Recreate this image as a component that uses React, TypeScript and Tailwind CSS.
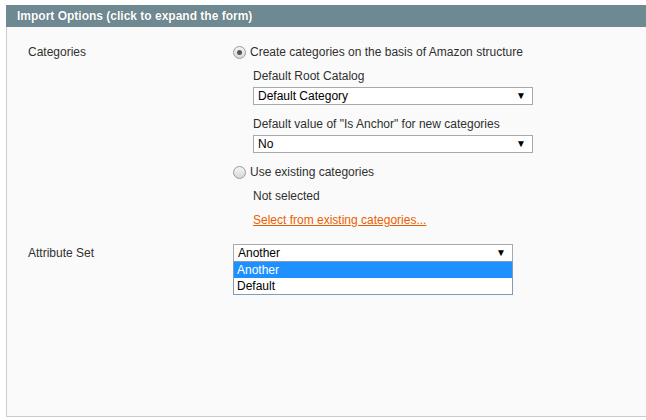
import React from "react";

const font = { fontFamily: '"Liberation Sans", Arial, sans-serif' };

function Radio({ checked }: { checked?: boolean }) {
  return (
    <span className="w-[13px] h-[13px] rounded-full border border-[#9a9a9a] bg-gradient-to-b from-[#f4f4f4] to-[#d8d8d8] flex items-center justify-center flex-shrink-0">
      {checked && <span className="w-[5px] h-[5px] rounded-full bg-[#555]" />}
    </span>
  );
}

function Select({ value }: { value: string }) {
  return (
    <div className="w-[280px] h-[18px] border border-[#a9a9a9] bg-white flex items-center justify-between pl-[4px] pr-[6px] text-black text-[12px] leading-none">
      <span>{value}</span>
      <span className="text-[10px]">▼</span>
    </div>
  );
}

export default function App() {
  return (
    <div className="w-[646px] h-[420px] bg-white pt-[5px] pl-[6px] overflow-hidden" style={font}>
      <div className="h-[22px] bg-[#6f8992] flex items-center pl-[11px] text-white text-[12px] font-bold [text-shadow:0_0_1px_rgba(0,0,0,0.3)]">
        Import Options (click to expand the form)
      </div>
      <div className="h-[390px] bg-[#fafafa] border-l border-b border-[#cccccc] pt-[16px] pl-[21px] text-[12px] text-[#303030]">
        {/* Categories */}
        <div className="flex">
          <div className="w-[205px] h-[18px] flex items-center">Categories</div>
          <div className="flex flex-col">
            <div className="h-[18px] flex items-center gap-[4px]">
              <Radio checked />
              <span>Create categories on the basis of Amazon structure</span>
            </div>
            <div className="pl-[20px] flex flex-col">
              <div className="h-[18px] mt-[6px] flex items-center">Default Root Catalog</div>
              <div className="mt-[2px]">
                <Select value="Default Category" />
              </div>
              <div className="h-[18px] mt-[10px] flex items-center">
                Default value of "Is Anchor" for new categories
              </div>
              <div className="mt-[2px]">
                <Select value="No" />
              </div>
            </div>
            <div className="h-[18px] mt-[10px] flex items-center gap-[4px]">
              <Radio />
              <span>Use existing categories</span>
            </div>
            <div className="pl-[20px] flex flex-col">
              <div className="h-[18px] mt-[6px] flex items-center">Not selected</div>
              <div className="h-[18px] mt-[6px] flex items-center">
                <a className="text-[#eb5e00] underline">Select from existing categories...</a>
              </div>
            </div>
          </div>
        </div>

        {/* Attribute set */}
        <div className="flex mt-[15px]">
          <div className="w-[205px] h-[18px] flex items-center">Attribute Set</div>
          <div className="relative">
            <Select value="Another" />
            <div className="absolute left-0 top-[17px] w-[280px] border border-[#7f9db9] bg-white text-black text-[12px]">
              <div className="h-[16px] bg-[#1e90ff] text-white pl-[3px] flex items-center">Another</div>
              <div className="h-[16px] pl-[3px] flex items-center">Default</div>
            </div>
          </div>
        </div>
      </div>
    </div>
  );
}
